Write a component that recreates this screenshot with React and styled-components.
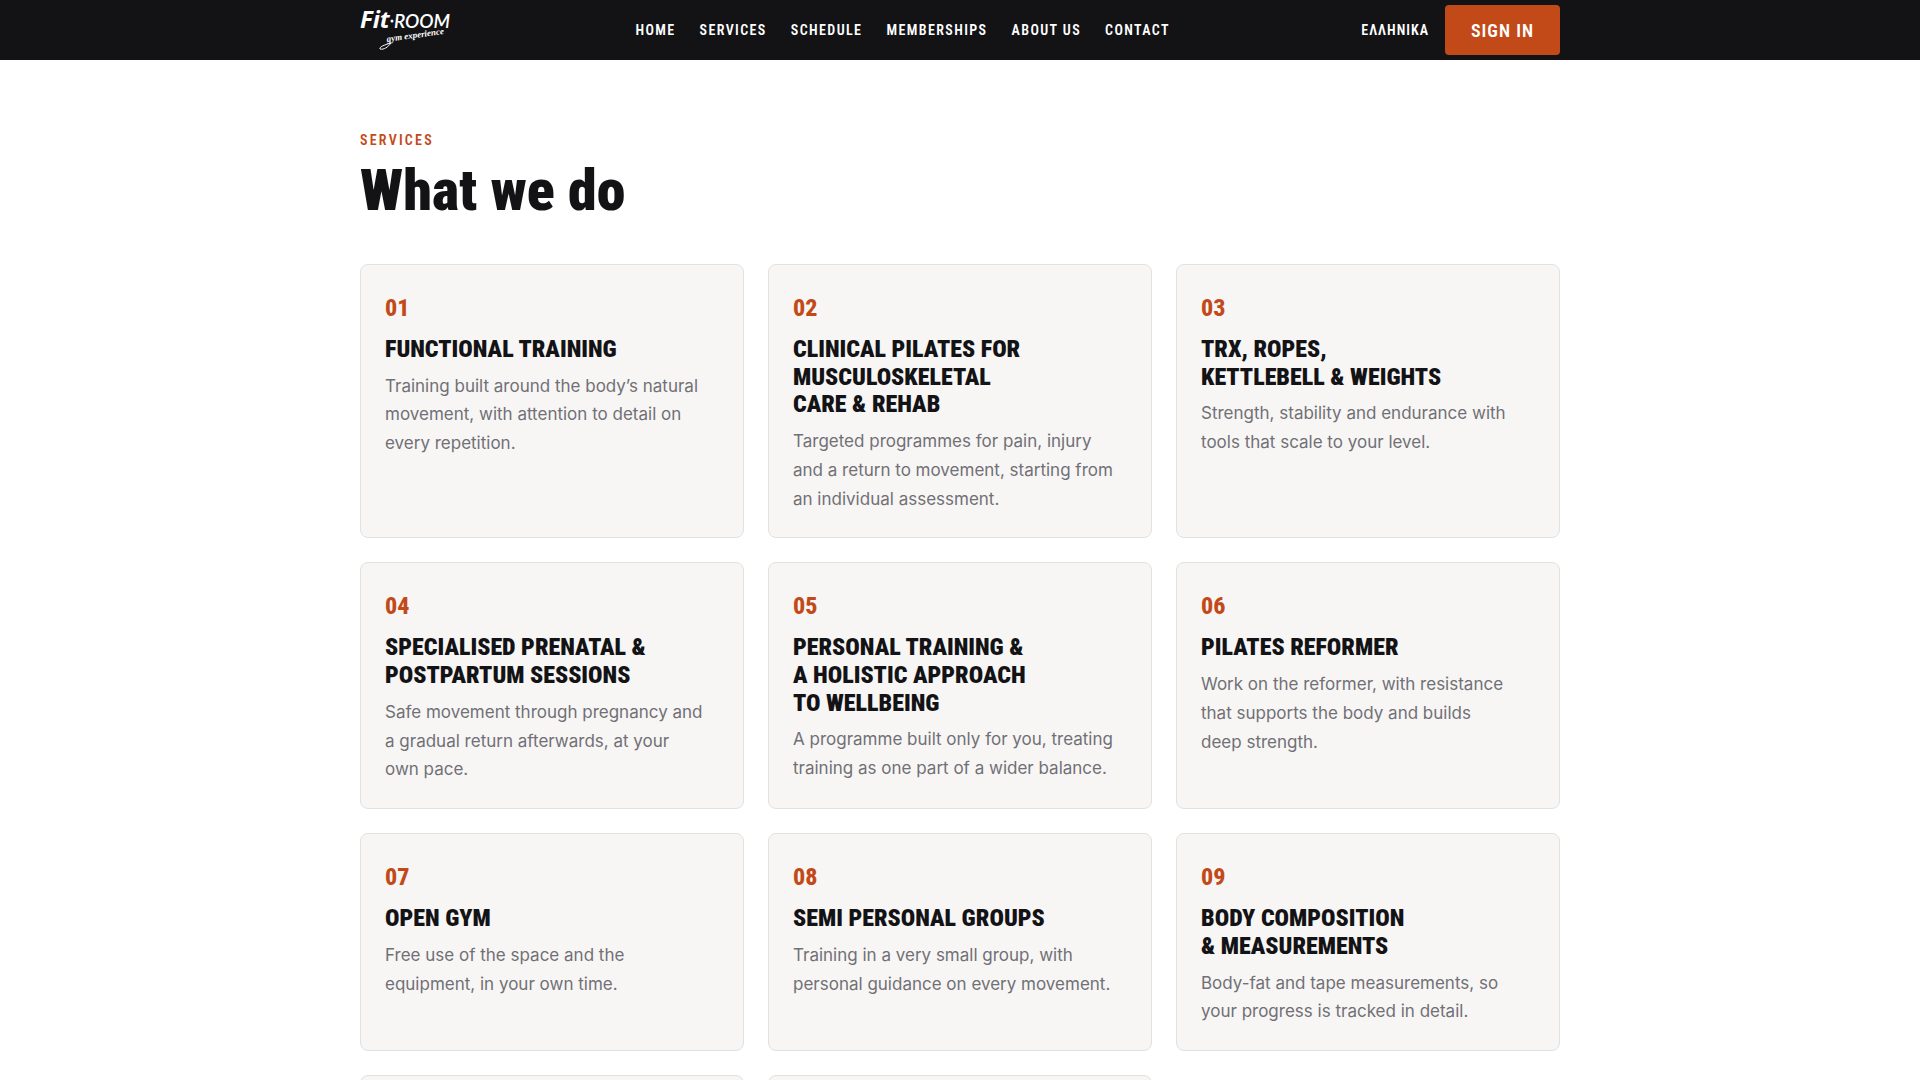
import React from 'react'
import styled, { createGlobalStyle } from 'styled-components';

const GlobalStyle = createGlobalStyle`
  * {
    box-sizing: border-box;
  }

  body {
    margin: 0;
    background: #fff;
    color: #131316;
    font-family: Inter, 'Liberation Sans', sans-serif;
  }
`;

const condensed = "'Roboto Condensed', Roboto, 'Open Sans', sans-serif";

const Header = styled.header`
  background: #131316;
`;

const HeaderInner = styled.div`
  display: flex;
  justify-content: space-between;
  align-items: center;
  max-width: 1200px;
  height: 60px;
  margin: 0 auto;
`;

const LogoLink = styled.a`
  display: flex;
  color: #fff;

  svg {
    overflow: visible;
  }
`;

const Nav = styled.nav`
  display: flex;
  gap: 24px;
`;

const NavLink = styled.a`
  font-family: ${condensed};
  font-size: 14px;
  font-weight: 600;
  line-height: 20px;
  letter-spacing: 0.1em;
  text-transform: uppercase;
  text-decoration: none;
  color: #fff;
`;

const Actions = styled.div`
  display: flex;
  align-items: center;
  justify-content: flex-end;
  gap: 8px;
`;

const LangLink = styled(NavLink)`
  padding: 0 8px;
  letter-spacing: 1px;
`;

const SignInButton = styled.button`
  height: 50px;
  padding: 0 26px;
  border: 0;
  border-radius: 4px;
  background: #c24a19;
  color: #fff;
  font-family: ${condensed};
  font-size: 18px;
  font-weight: 600;
  letter-spacing: 1px;
  text-transform: uppercase;
  cursor: pointer;
`;

const Main = styled.main`
  max-width: 1200px;
  margin: 0 auto;
  padding: 69px 0 72px;
`;

const Eyebrow = styled.p`
  margin: 0;
  font-family: ${condensed};
  font-size: 14px;
  font-weight: 600;
  line-height: 22px;
  letter-spacing: 0.16em;
  text-transform: uppercase;
  color: #c24a19;
`;

const Title = styled.h1`
  margin: 7px 0 42px;
  font-family: ${condensed};
  font-size: 58px;
  font-weight: 900;
  line-height: 64px;
`;

const Grid = styled.div`
  display: grid;
  grid-template-columns: repeat(3, 1fr);
  gap: 24px;
`;

const Card = styled.article`
  padding: 28px 24px 24px;
  border: 1px solid #e2e1e0;
  border-radius: 8px;
  background: #f7f6f5;
`;

const CardNumber = styled.div`
  margin-bottom: 13px;
  font-family: ${condensed};
  font-size: 24px;
  font-weight: 800;
  line-height: 30px;
  color: #c24a19;
`;

const CardTitle = styled.h2`
  margin: 0 0 8px;
  font-family: ${condensed};
  font-size: 24px;
  font-weight: 900;
  line-height: 1.15;
  text-transform: uppercase;
  white-space: pre-line;
`;

const CardText = styled.p`
  max-width: 324px;
  margin: 0;
  font-size: 17px;
  line-height: 1.7;
  color: #717075;
  text-wrap: pretty;
`;

const links = ['Home', 'Services', 'Schedule', 'Memberships', 'About us', 'Contact'];

const services = [
	{ title: 'Functional training', text: 'Training built around the body’s natural movement, with attention to detail on every repetition.' },
	{ title: 'Clinical pilates for\nmusculoskeletal\ncare & rehab', text: 'Targeted programmes for pain, injury and a return to movement, starting from an individual assessment.' },
	{ title: 'TRX, ropes,\nkettlebell & weights', text: 'Strength, stability and endurance with tools that scale to your level.' },
	{ title: 'Specialised prenatal &\npostpartum sessions', text: 'Safe movement through pregnancy and a gradual return afterwards, at your own pace.' },
	{ title: 'Personal training &\na holistic approach\nto wellbeing', text: 'A programme built only for you, treating training as one part of a wider balance.' },
	{ title: 'Pilates reformer', text: 'Work on the reformer, with resistance that supports the body and builds deep strength.' },
	{ title: 'Open gym', text: 'Free use of the space and the equipment, in your own time.' },
	{ title: 'Semi personal groups', text: 'Training in a very small group, with personal guidance on every movement.' },
	{ title: 'Body composition\n& measurements', text: 'Body-fat and tape measurements, so your progress is tracked in detail.' },
];

const Logo = () => (
	<svg width="92" height="44" viewBox="0 0 92 44" fill="currentColor" role="img" aria-label="Fit-Room gym experience">
		<text x="0" y="20" fontFamily="'Open Sans', sans-serif" fontSize="24" fontWeight="700" fontStyle="italic">Fit</text>
		<circle cx="32" cy="13" r="1.5" />
		<text x="34" y="20" fontFamily="Lato, sans-serif" fontSize="19" fontWeight="600" fontStyle="italic">ROOM</text>
		<text x="27" y="34" fontFamily="'Liberation Serif', serif" fontSize="9" fontWeight="700" fontStyle="italic" transform="rotate(-8 27 34)">gym experience</text>
		<path d="M31 35C28 39 24 42 20 41C19 39 24 37 31 35" fill="none" stroke="currentColor" />
	</svg>
);

const ServiceCard = ({ number, title, text }) => (
	<Card>
		<CardNumber>{number}</CardNumber>
		<CardTitle>{title}</CardTitle>
		<CardText>{text}</CardText>
	</Card>
);

const App = () => {
	return (
		<>
			<GlobalStyle />
			<Header>
				<HeaderInner>
					<LogoLink href="#home">
						<Logo />
					</LogoLink>
					<Nav>
						{links.map((link) => (
							<NavLink key={link} href="#">{link}</NavLink>
						))}
					</Nav>
					<Actions>
						<LangLink href="#el" lang="el">ΕΛΛΗΝΙΚΑ</LangLink>
						<SignInButton type="button">Sign in</SignInButton>
					</Actions>
				</HeaderInner>
			</Header>
			<Main>
				<Eyebrow>Services</Eyebrow>
				<Title>What we do</Title>
				<Grid>
					{services.map((service, i) => (
						<ServiceCard
							key={service.title}
							number={String(i + 1).padStart(2, '0')}
							title={service.title}
							text={service.text}
						/>
					))}
					<Card />
					<Card />
				</Grid>
			</Main>
		</>
	)
}

export default App;
